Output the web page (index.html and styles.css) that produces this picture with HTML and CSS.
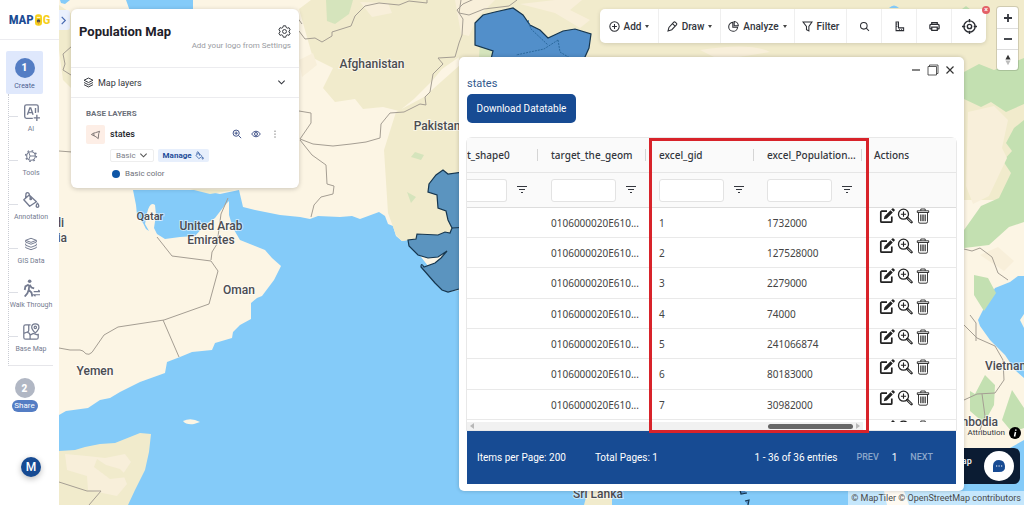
FILE: index.html
```html
<!DOCTYPE html>
<html lang="en">
<head>
<meta charset="utf-8">
<meta name="viewport" content="width=device-width, initial-scale=1">
<title>Population Map</title>
<link rel="stylesheet" href="styles.css">
</head>
<body>
<svg class="symbols" aria-hidden="true">
  <symbol id="filter-lines" viewBox="0 0 12 12"><path d="M1 2.500h10M3 5.500h6M5 8.500h2" fill="none" stroke="currentColor" stroke-width="1.200"/></symbol>
  <symbol id="edit" viewBox="0 0 16 16"><path d="M8 3.200H2.800a1 1 0 0 0-1 1v9a1 1 0 0 0 1 1h9a1 1 0 0 0 1-1V8.500" fill="none" stroke="currentColor" stroke-width="1.700"/><path d="m5.500 8.200 6-6 2.300 2.300-6 6-3 .8zM12.200 1.500 13.300.4q.6-.4 1.200 0l1.100 1.100q.4.600 0 1.200l-1.100 1.100z" fill="currentColor"/></symbol>
  <symbol id="zoom-in" viewBox="0 0 16 16"><g fill="none" stroke="currentColor"><circle cx="6.500" cy="6.200" r="5" stroke-width="1.300"/><path d="M6.500 3.600v5.200M3.900 6.200h5.200" stroke-width="1.100"/><path d="m10.300 10 4.200 4.200" stroke-width="2.500" stroke-linecap="round"/><path d="m10.800 10.500 3.600 3.600" stroke="#fff" stroke-width=".8"/></g></symbol>
  <symbol id="trash" viewBox="0 0 16 16"><g fill="none" stroke="currentColor" stroke-width=".9"><path d="M3.500 4.500v9.200q0 1.500 1.500 1.500h6q1.500 0 1.500-1.500V4.500M2.300 2.800h11.400v1.700H2.300zM5.800 2.700V1h4.400v1.700M5.700 6.500v6.700M7.200 6.500v6.700M8.800 6.500v6.700M10.300 6.500v6.700"/></g></symbol>
  <symbol id="layers" viewBox="0 0 16 16"><path d="m8 1.500 6.500 3.200L8 8 1.500 4.700zM1.500 8 8 11.300 14.500 8M1.500 11.200 8 14.500l6.500-3.300" fill="none" stroke="currentColor" stroke-width="1.400" stroke-linejoin="round"/></symbol>
  <symbol id="gear" viewBox="0 0 16 16"><path d="m6.500 1-.5 2-1.500.9-2-.6L1 6l1.500 1.300v1.500L1 10l1.500 2.700 2-.6L6 13l.5 2h3l.5-2 1.500-.9 2 .6L15 10l-1.500-1.200V7.300L15 6l-1.500-2.700-2 .6L10 3l-.5-2z" fill="none" stroke="currentColor" stroke-width="1.200" stroke-linejoin="round"/><circle cx="8" cy="8" r="2.400" fill="none" stroke="currentColor" stroke-width="1.200"/></symbol>
  <symbol id="bucket" viewBox="0 0 20 20"><g fill="none" stroke="currentColor" stroke-width="1.500" stroke-linejoin="round"><path d="M8 4.500 16 12l-7.500 5L2 9.700zM4 7.500 4.500 2.800Q6 .8 7.700 2.600L9.500 8"/><circle cx="9.700" cy="8.800" r=".8"/><path d="M17.200 13.500q-2 2.600-1.200 4 1.200 1.300 2.400 0 .8-1.400-1.200-4z"/></g></symbol>
  <symbol id="chevron" viewBox="0 0 10 10"><path d="m1.500 3 3.500 3.500L8.500 3" fill="none" stroke="currentColor" stroke-width="1.200"/></symbol>
</svg>

<nav class="sidebar" aria-label="Main">
  <a class="logo" href="#home" aria-label="MAPOG"><span>MAP</span><svg viewBox="0 0 8 13"><rect width="8" height="13" rx="3.500" fill="#f6cf1c"/><path d="M2 3.500h4" stroke="#fff" stroke-width="1"/><circle cx="4" cy="7.500" r="2" fill="#4b4e4b"/><path d="M3 8.500 4 12l1-3.500" fill="#d98734"/></svg><span class="logo-g">G</span></a>
  <button class="create"><span class="step">1</span>Create</button>
  <ul class="tools">
    <li><a href="#ai"><svg viewBox="0 0 20 20"><g fill="none" stroke="currentColor" stroke-width="1.500"><path d="M18 10.500V4q0-2-2-2H5Q3 2 3 4v11q0 2 2 2h7"/><path d="m6 13 2.700-7.500h1L12.300 13M7 10.700h4.300M15 5.500V11M16.500 13v7M13 16.500h7"/></g></svg>AI</a></li>
    <li><a href="#tools"><svg viewBox="0 0 20 20"><g fill="none" stroke="currentColor"><circle cx="10" cy="10" r="4.800" stroke-width="1.200"/><circle cx="10" cy="10" r="6" stroke-width="1.600" stroke-dasharray="1.800 2.910"/><path d="M15 10H9L7.500 6M9 10l-1.500 4" stroke-width="1.100"/></g></svg>Tools</a></li>
    <li><a href="#annotation"><svg viewBox="0 0 20 20"><use href="#bucket"/></svg>Annotation</a></li>
    <li><a href="#gis"><svg viewBox="-3 -3 22 22"><path d="m8 1 6.500 2.500L8 6 1.500 3.500zM1.500 3.500v2.200L8 8.300l6.500-2.600V3.500M1.500 7.500v2L8 12l6.500-2.500v-2M1.500 11.300v1.200L8 15l6.500-2.500v-1.200" fill="none" stroke="currentColor" stroke-width="1.200" stroke-linejoin="round"/></svg>GIS Data</a></li>
    <li><a href="#walk"><svg viewBox="0 0 20 20"><circle cx="8.500" cy="2.500" r="2" fill="currentColor"/><path d="M7.500 6 3.800 8.200l-.8 4M8.500 6.500l2 3 3 1M8.200 6.300 7.500 12l3 3 1 4.500M7.300 12.500 6 16l-3 3.500" fill="none" stroke="currentColor" stroke-width="2"/><path d="M13 14h7m-2-1.800 2 1.800M20 17.500h-7l2 1.700" fill="none" stroke="currentColor" stroke-width="1.300"/></svg>Walk Through</a></li>
    <li><a href="#basemap"><svg viewBox="0 0 20 20"><g fill="none" stroke="currentColor" stroke-width="1.400"><path d="M9.500 2H4Q2 2 2 4v12q0 2 2 2h12q2 0 2-2v-4M7.500 2v6q0 1.500-1.500 2l-4 1.500M9 18v-4q0-3-3-3.500M9 13.500l3.500-2L18 13.500"/><path d="M14.800 11q-4-3.500-4-6.200 0-3.800 4-3.800t4 3.800q0 2.700-4 6.200z"/><circle cx="14.800" cy="4.900" r="1.300"/></g></svg>Base Map</a></li>
  </ul>
  <button class="share"><span class="step muted">2</span><span class="share-label">Share</span></button>
  <button class="avatar">M</button>
</nav>

<main class="map">
  <svg class="canvas" viewBox="59 0 965 505" preserveAspectRatio="xMinYMin slice" role="img" aria-label="Map of the Middle East and South Asia">
    <path class="land" d="M59 0H1024V276H1018L1010 282 995 288 988 300 978 320 980 326 990 340 1005 355 1015 370 1024 378V440L1010 448H480L470 288 448 292 408 240 402 241 396 236 393 226 388 224 385 216 379 212 360 219 352 216 340 217 318 216 310 219 300 217 280 215 255 210 243 207 239 190 220 194 200 190H133L136 205 137 215 143 223 146 229 149 231 145 224 147 213Q150 201 155 205L156 215 154 228 157 234 165 239 180 237 195 236 205 225 215 218 225 205 229 201V215L233 228 240 240 255 246 265 250 272 258 281 266 274 280 262 296 257 298 251 303V319L240 325 233 332 232 338 215 343 212 350 192 352 180 357 167 362 165 373 140 382 120 392 110 398 100 400 88 408 66 411 59 415Z"/>
    <path class="water" d="M126 0h67v9l-16 5h-46zM60 0h10l-5 4-4-1z"/>
    <path class="steppe" d="M299 9l12-9h145l10 25-4 30-20 14-10 12-18 18-15 12-16-4-20 2-8-10-20 3-12-14 10-20-20-10zM384 150l12-38 28-15 36-32v170l-52 5-6 1-6-6-8-22zM59 5l12 8v75l-8-8-4-30zM190 189l20 5 25-4zM456 0h568v200h-60V60H459z"/>
    <path class="water" d="M889 8q5-5 10 0z"/>
    <path class="grass" d="M326 0h27l-4 14-14 10-8-3zM480 42l14 5-3 11h-12zM415 152l9 3-3 5-10-3zM407 192l9 5-5 6z" opacity=".6"/>
    <path class="grass" d="M964 72l15-8 15 6 30-12v46l-18 8-15-10-10 5-17-8zM1024 120l-10 8-8 15 6 8-9 10 8 12-12 25-18 8-17 24v18l25-3 20-18 15-5zM974 275l14 3 8 15-12 18-10-16zM985 375l10 10-1 20-10 18-14-12v-20l5 3zM1012 390l12 18v20l-12 4-10-12zM958 12l8-6 10 8-8 5z"/>
    <path class="cream" d="M360 2l28 1 4 10-20 4zM455 0h40l-18 18-8 18-8-2zM520 4l35-4h27l-12 10 20 10-10 8-25-15zM299 60l14-7 4 12-15 12zM700 50q50-8 70 2l-50 8zM968 112l26-6 14 14-6 28 5 10-18 38-16 8-7-18zM980 255l18-8 16 14-10 10z"/>
    <path class="land" d="M183 421q8-4 17 1l-6 2q-8 1-11-3zM1020 320l4-6v14zM884 491h20l5 14h-22z"/>
    <path class="steppe" d="M59 451l16-1 10-3 15-3 15-1 25-10 11 1-2 18-4 18-10 20-7 15H59zM588 490h24v15h-28z"/>
    <path class="cream" d="M65 454l22 2 18 2 20-4 6 8-8 12 4 10-10 12-29-6-1-14-20-6z"/>
    <path class="steppe" d="M97 459l-3 8 16 12 18-2-8-8-14-4z"/>
    <path class="border" d="M157 237l15 19 39 5 7 10-9 33-45 16-46 7-14 8-9 13q-6 11-12 3l-3-1H70l-11-2M163 320l16 37M211 260l1-8 5-8 4-30 7-16M59 482l28 9h14l-12 14M59 151l13 1M299 111l12 2v10l-11 16 13 5 20 2 18-2 15-2 14-4 1-14 9-11 14-1 16-8 6 1-1-8 5-5 3-18 10-10-5-6 17-1 4-14 3-8 1-16-6-9 6-6 22-10 12-4M300 140l12 15 14 10 1 19 7 2-1 8-12 3-7 8-3 12M299 31l6 8 10-1 7 4 10-6v-4l19-6 4-10 10-10 14-3 20 2 10-4 18 2v-4M461 0l-2 13 10 2 15-6 25-3 8-6M72 46l-9 8 2 10-2 6 8 5M291 9l11 15M964 249l8 2 8-3 12 9 6 16 10 7M964 325l13 13 18 8 8 14 1 20-9 13-18 1-13 6M970 315l6 8v18M982 394l3 22-5 14"/>
    <g class="state">
      <path d="m475 23 8-8 12-3 18-4 10 7 7 10 10 5 8 8 15-7 12-2 16 5-2 14-4 9v22H487l2-8 10-5-8-7 2-8-18-6z"/>
      <path class="south" d="M470 171 448 174 443 170 436 175 429 184 428 192 437 195 438 208 446 211 448 220 452 228 450 233 445 232 438 235 417 234 416 239 408 240 409 246 418 255 428 258 438 257 447 251 441 258 435 263 424 267Q421 262 421 267L435 283 442 290 448 292 459 289 475 280Z"/>
      <path d="M452 228 470 227M739 486l2 8 6-1M745 501l4-1-1 5"/>
    </g>
    <path class="district" d="m528 20 3 9 17 16M558 40l-14 9-28 6M558 40l2 12 10 6"/>
    <g class="labels">
      <text x="372" y="68">Afghanistan</text><text x="437" y="130">Pakistan</text>
      <text x="150" y="220" class="small">Qatar</text><text x="211" y="230">United Arab</text><text x="211" y="244">Emirates</text>
      <text x="239" y="294">Oman</text><text x="95" y="375">Yemen</text><text x="598" y="498">Sri Lanka</text>
      <text x="64" y="227" class="end">Saudi</text><text x="67" y="242" class="end">Arabia</text>
      <text x="985" y="370" class="start">Vietnam</text><text x="998" y="426" class="end">Cambodia</text>
    </g>
  </svg>

  <button class="collapse" aria-label="Toggle panel"><svg viewBox="0 0 10 10"><path d="m3 1 4 4-4 4" fill="none" stroke="currentColor" stroke-width="1.300"/></svg></button>

  <section class="panel">
    <header class="panel-head">
      <h1>Population Map</h1>
      <button class="icon" aria-label="Settings"><svg class="i13"><use href="#gear"/></svg></button>
      <p>Add your logo from Settings</p>
    </header>
    <button class="layers-row"><svg class="i11"><use href="#layers"/></svg><span>Map layers</span><svg class="i9"><use href="#chevron"/></svg></button>
    <div class="layers">
      <h2>BASE LAYERS</h2>
      <div class="layer">
        <span class="thumb"><svg viewBox="0 0 12 12"><path d="m1.500 6 2.500-1.500 2-.5 4.500-1.500-1 2.500L9 10.500 6.500 8.500 4.500 7.500zM4 4.500l.5 3" fill="none" stroke="currentColor"/></svg></span>
        <strong>states</strong>
        <button class="icon" aria-label="Zoom to layer"><svg viewBox="0 0 12 12"><path d="M7.800 7.800 11 11M5 3v4M3 5h4" stroke="currentColor" stroke-width="1.200"/><circle cx="5" cy="5" r="3.700" fill="none" stroke="currentColor" stroke-width="1.200"/></svg></button>
        <button class="icon" aria-label="Toggle visibility"><svg viewBox="0 0 12 12"><path d="M.7 6Q6-.8 11.300 6 6 12.800.7 6z" fill="none" stroke="currentColor" stroke-width="1.200"/><circle cx="6" cy="6" r="1.800" fill="none" stroke="currentColor" stroke-width="1.200"/></svg></button>
        <button class="icon" aria-label="More"><svg viewBox="0 0 12 12"><path d="M6 2v1.300M6 5.500v1.300M6 9v1.300" stroke="currentColor" stroke-width="1.200"/></svg></button>
      </div>
      <div class="style-row"><button class="basic">Basic <svg class="i9"><use href="#chevron"/></svg></button><button class="manage">Manage <svg class="i9"><use href="#bucket"/></svg></button></div>
      <p class="legend"><span class="dot"></span>Basic color</p>
    </div>
  </section>

  <div class="toolbar" role="toolbar">
    <button class="w-add"><svg viewBox="0 0 16 16"><circle cx="8" cy="8" r="6.800"/><path d="M8 4.500v7M4.500 8h7"/></svg>Add<i></i></button>
    <button class="w-draw"><svg viewBox="0 0 16 16"><path d="m1.500 14.500 1.300-5L9.500 2q1.200-1.200 2.500-.3l1.800 1.600q1 1.200-.1 2.400L7 12.700zM8 3.700l4 4"/></svg>Draw<i></i></button>
    <button class="w-analyze"><svg viewBox="0 0 16 16"><path d="M7 2a6.500 6.500 0 1 0 7 7H7zM9 .8V7h6A6.200 6.200 0 0 0 9 .8z"/></svg>Analyze<i></i></button>
    <button class="w-filter"><svg viewBox="0 0 16 16"><path d="M1.500 1.500h13L10 8v6.500l-3.500-2V8z"/></svg>Filter</button>
    <button class="w-icon" aria-label="Search"><svg viewBox="0 0 16 16"><circle cx="7" cy="7" r="4.800"/><path d="m10.500 10.500 4 4"/></svg></button>
    <button class="w-icon" aria-label="Measure"><svg viewBox="0 0 16 16"><path d="M3 1.500h3.500v8.500H14v4H3zM3 4.500h2M3 7.500h2M8 14v-2M11 14v-2"/></svg></button>
    <button class="w-icon" aria-label="Print"><svg viewBox="0 0 16 16"><path d="M4 5V2.200h8V5M4 11.500H2q-.7 0-.7-.8V6.500Q1.300 5 2.800 5h10.400q1.500 0 1.500 1.500v4.200q0 .8-.7.800h-2M4 9h8v4.800H4z" stroke-width="1.800"/></svg></button>
    <button class="w-icon" aria-label="Locate"><svg class="locate" viewBox="0 0 16 16"><circle cx="8" cy="8" r="6"/><circle cx="8" cy="8" r="2.300"/><path d="M8 0v3.500M8 12.500V16M0 8h3.500M12.500 8H16"/></svg></button>
    <button class="dismiss" aria-label="Close toolbar">×</button>
  </div>

  <div class="zoom">
    <button aria-label="Zoom in"><svg viewBox="0 0 10 10"><path d="M5 1v8M1 5h8" stroke="currentColor" stroke-width="1.800"/></svg></button>
    <button aria-label="Zoom out"><svg viewBox="0 0 10 10"><path d="M1 5h8" stroke="currentColor" stroke-width="1.800"/></svg></button>
    <button aria-label="Reset north"><svg viewBox="0 0 10 14"><path d="M5 1 8 6.500H2z" fill="#333"/><path d="M5 13 2 7.500h6z" fill="#bbb"/></svg></button>
  </div>

  <div class="attribution">Attribution <svg viewBox="0 0 12 12"><circle cx="6" cy="6" r="6"/><path d="M6.500 5 5.500 9.500M6.800 2.500v1.300" stroke="#fff" stroke-width="1.500"/></svg></div>
  <div class="promo"><span>Map</span><button aria-label="Chat"><svg viewBox="0 0 14 14"><path d="M1 13V6.500Q1.500 1 7 1t6 6-6 6z" fill="#174b93"/><path d="M4 7h1.200M6.500 7h1.200M9 7h1.200" stroke="#fff" stroke-width="1.200"/></svg></button></div>
  <footer class="credits"><a href="#maptiler">© MapTiler</a> <a href="#osm">© OpenStreetMap contributors</a></footer>

  <section class="window">
    <div class="controls">
      <button aria-label="Minimize"><svg viewBox="0 0 12 12"><path d="M2 6h8"/></svg></button>
      <button aria-label="Maximize"><svg viewBox="0 0 12 12"><path d="M1 2.500h8.500V11H1zM2.500 2.500V1H11v8.500H9.500"  stroke-width=".8"/></svg></button>
      <button aria-label="Close"><svg viewBox="0 0 12 12"><path d="m2.500 2.500 7 7M9.500 2.500l-7 7"/></svg></button>
    </div>
    <h2>states</h2>
    <button class="download">Download Datatable</button>
    <div class="grid">
      <div class="scroller">
      <table>
        <colgroup><col class="c-shape"><col class="c-data"><col class="c-data"><col class="c-data"><col></colgroup>
        <thead>
          <tr class="names"><th>t_shape0</th><th>target_the_geom</th><th>excel_gid</th><th>excel_Population...</th><th>Actions</th></tr>
          <tr class="filters">
            <td><div><input aria-label="Filter t_shape0"><button aria-label="Filter options"><svg><use href="#filter-lines"/></svg></button></div></td>
            <td><div><input aria-label="Filter target_the_geom"><button aria-label="Filter options"><svg><use href="#filter-lines"/></svg></button></div></td>
            <td><div><input aria-label="Filter excel_gid"><button aria-label="Filter options"><svg><use href="#filter-lines"/></svg></button></div></td>
            <td><div><input aria-label="Filter excel_Population"><button aria-label="Filter options"><svg><use href="#filter-lines"/></svg></button></div></td>
            <td></td>
          </tr>
        </thead>
        <tbody id="rows"></tbody>
      </table>
      </div>
      <div class="hscroll"><span class="arrow"></span><span class="bar"></span><span class="arrow next"></span></div>
      <div class="highlight"></div>
    </div>
    <footer class="pager">
      <span class="per">Items per Page: 200</span><span>Total Pages: 1</span>
      <span class="entries">1 - 36 of 36 entries</span><button>PREV</button><span class="page">1</span><button>NEXT</button>
    </footer>
  </section>
</main>
<script src="rows.js"></script>
</body>
</html>
```

FILE: styles.css
```css
* { box-sizing: border-box; }
body { margin: 0; display: flex; min-height: 100vh; font-family: Roboto, "Liberation Sans", sans-serif; font-size: 9px; color: #33363d; }
button { font: inherit; color: inherit; background: none; border: 0; padding: 0; }
a { color: inherit; text-decoration: none; }
h1, h2, p, ul { margin: 0; padding: 0; }
svg { display: block; flex: none; }
.symbols { position: absolute; width: 0; height: 0; }

/* Sidebar */
.sidebar { width: 59px; flex: none; display: flex; flex-direction: column; background: #fff; color: #747b90; font-size: 7px; }
.logo { height: 40px; display: flex; align-items: center; justify-content: center; gap: 1px; border-bottom: 1px solid #ececf0; color: #1c4c94; font: 700 13px/20px "Roboto Condensed", Roboto, sans-serif; }
.logo svg { width: 7px; height: 12px; }
.logo-g { color: #f6cf1c; }
.create { width: 37px; height: 43px; margin: 11px 0 0 6px; background: #dfe8fc; border-radius: 2px; display: flex; flex-direction: column; align-items: center; gap: 3px; padding-top: 7px; color: #4b5f91; line-height: 10px; }
.step { width: 20px; height: 20px; border-radius: 50%; background: #547dc4; color: #fff; display: flex; align-items: center; justify-content: center; font-weight: 900; font-size: 10px; }
.step.muted { background: #b1b7c4; }
.tools { list-style: none; margin: 0 6px 0 8px; padding-top: 7px; border-left: 1px dotted #c9ccd4; border-bottom: 1px solid #e6e6ea; }
.tools li { height: 44px; display: flex; justify-content: center; background: linear-gradient(#dddfe5, #dddfe5) 0 15px / 9px 1px no-repeat; }
.tools a { display: flex; flex-direction: column; align-items: center; line-height: 12px; white-space: nowrap; }
.tools svg { width: 18px; height: 18px; margin: 2px 0; }
.share { margin: 12px 0 0 12px; width: 25px; display: flex; flex-direction: column; align-items: center; gap: 2px; }
.share-label { background: #547dc4; color: #fff; border-radius: 6px; width: 26px; line-height: 12px; font-size: 8px; }
.avatar { width: 20px; height: 20px; margin: 45px 0 0 21px; border-radius: 50%; background: #174b93; color: #fff; font-size: 12px; font-weight: 500; box-shadow: 0 2px 6px #0004; }

/* Map */
.map { flex: 1; position: relative; overflow: hidden; background: #84cbf9; }
.canvas { position: absolute; inset: 0; width: 100%; height: 100%; }
.land { fill: #fcf5e4; }
.water { fill: #84cbf9; }
.steppe { fill: #f1ebcc; }
.grass { fill: #c3e0b1; }
.cream { fill: #f8efda; }
.border { fill: none; stroke: #a59e93; stroke-width: 1; }
.state path { fill: #528fca; stroke: #16364f; stroke-width: 1.2; }
.state .south { fill: #5b94bf; }
.district { fill: none; stroke: #2c6a9e; stroke-width: 1; stroke-dasharray: 2 1; }
.labels { font: 500 12px Roboto, sans-serif; fill: #4b4c51; text-anchor: middle; stroke: #fff8; stroke-width: 2px; paint-order: stroke; }
.labels .small { font-size: 11px; }
.labels .start { text-anchor: start; }
.labels .end { text-anchor: end; }
.collapse { position: absolute; left: 0; top: 10px; width: 11px; height: 20px; background: #eaf0fd; color: #4568b0; border-radius: 0 3px 3px 0; }
.collapse svg { width: 9px; height: 9px; }

/* Layer panel */
.panel { position: absolute; left: 12px; top: 9px; width: 228px; background: #fff; border-radius: 6px; box-shadow: 0 1px 5px #0003; }
.panel-head { display: grid; grid-template-columns: 1fr auto; align-content: start; height: 59px; padding: 14px 8px 0; border-bottom: 1px solid #ececef; }
.panel h1 { font-size: 13px; line-height: 17px; color: #1e2129; }
.panel-head .icon { align-self: center; }
.panel-head p { grid-column: 1 / 3; text-align: right; font-size: 8px; line-height: 11px; color: #9a9ca2; }
.i13 { width: 13px; height: 13px; }
.i11 { width: 11px; height: 11px; }
.i9 { width: 9px; height: 9px; }
.layers-row { width: 100%; height: 30px; display: flex; align-items: center; gap: 4px; padding: 0 13px 0 12px; border-bottom: 1px solid #ececef; }
.layers-row span { flex: 1; text-align: left; }
.layers { padding: 10px 15px 8px; }
.layers h2 { font-size: 8px; line-height: 12px; font-weight: 700; color: #6c7079; }
.layer { display: flex; align-items: center; gap: 9px; margin-top: 4px; height: 20px; color: #44558a; }
.layer strong { flex: 1; margin-left: -4px; color: #24262c; font-weight: 500; }
.layer .icon svg { width: 10px; height: 10px; }
.layer .icon:last-child { color: #555; margin-right: 4px; }
.thumb { width: 19px; height: 19px; display: grid; place-items: center; background: #fdeee6; border-radius: 2px; color: #77706e; }
.thumb svg { width: 11px; height: 11px; }
.style-row { display: flex; gap: 4px; margin: 5px 0 0 24px; font-size: 8px; }
.style-row button { height: 13px; display: flex; align-items: center; gap: 3px; border-radius: 2px; padding: 0 5px; }
.basic { border: 1px solid #eee; color: #7c8088; }
.basic svg { color: #555; }
.style-row .manage { background: #e7effc; color: #1e4c99; font-weight: 700; }
.legend { display: flex; align-items: center; gap: 5px; margin: 6px 0 0 26px; font-size: 8px; line-height: 12px; color: #6d7078; }
.dot { width: 8px; height: 8px; border-radius: 50%; background: #0e56a6; }

/* Toolbar */
.toolbar { position: absolute; right: 38px; top: 9px; display: flex; height: 34px; background: #fff; border-radius: 5px; box-shadow: 0 1px 4px #0002; font-size: 10px; font-weight: 500; }
.toolbar button { display: flex; align-items: center; justify-content: center; gap: 4px; }
.toolbar button + button { border-left: 1px solid #efefef; }
.toolbar svg { width: 11px; height: 11px; fill: none; stroke: #2b2d33; stroke-width: 1.5; }
.toolbar .locate { width: 15px; height: 15px; }
.toolbar i { border: 2px solid transparent; border-top: 3px solid #444; border-bottom: 0; }
.w-add { width: 58px; } .w-draw { width: 62px; } .w-analyze { width: 74px; } .w-filter { width: 52px; } .w-icon { width: 35px; }
.toolbar button.dismiss { position: absolute; right: -4px; top: -3px; width: 8px; height: 8px; border: 0; border-radius: 50%; background: #e35f66; color: #fff; font-size: 7px; line-height: 8px; }

.zoom { position: absolute; right: 6px; top: 7px; width: 21px; background: #fff; border-radius: 3px; box-shadow: 0 0 0 1px #0002; }
.zoom button { display: grid; place-items: center; width: 100%; height: 21px; }
.zoom button + button { border-top: 1px solid #ddd; }
.zoom svg { width: 10px; height: 12px; }
.attribution { position: absolute; right: 3px; bottom: 65px; display: flex; align-items: center; gap: 4px; font-size: 8px; line-height: 14px; }
.attribution svg { width: 12px; height: 12px; }
.promo { position: absolute; right: 4px; bottom: 21px; width: 76px; height: 36px; display: flex; justify-content: space-between; padding: 3px 6px 3px 10px; background: #0b1c33; border-radius: 6px; color: #fff; font-weight: 500; }
.promo span { line-height: 20px; }
.promo button { width: 30px; height: 30px; border-radius: 50%; background: #fff; display: grid; place-items: center; }
.promo svg { width: 14px; height: 14px; }
.credits { position: absolute; right: 0; bottom: 0; padding: 0 3px; background: #fff8; color: #4a4a4a; font-size: 9px; line-height: 14px; }

/* Data window */
.window { position: absolute; right: 60px; top: 57px; bottom: 14px; width: 505px; display: flex; flex-direction: column; padding: 6px 8px 7px; background: #fff; border-radius: 5px; box-shadow: 0 0 4px #0003; }
.controls { display: flex; justify-content: flex-end; gap: 5px; height: 14px; }
.controls button { display: grid; place-items: center; }
.controls svg { width: 12px; height: 12px; fill: none; stroke: #333; stroke-width: 1.2; }
.window h2 { font-size: 11px; line-height: 13px; font-weight: 400; color: #31588d; }
.download { align-self: flex-start; width: 109px; height: 29px; margin: 4px 0 15px; border-radius: 5px; background: #174b93; color: #fff; font-size: 10px; }
.grid { position: relative; flex: 1; min-height: 0; display: flex; flex-direction: column; border-radius: 5px 5px 0 0; box-shadow: 0 0 0 1px #e8e8e8; font-family: "Noto Sans", sans-serif; font-size: 10px; }
.scroller { flex: 1; min-height: 0; overflow: hidden; }
table { width: 100%; table-layout: fixed; border-collapse: separate; border-spacing: 0; }
.c-shape { width: 71px; } .c-data { width: 108px; }
th, td { padding: 0 0 0 13px; text-align: left; white-space: nowrap; overflow: hidden; }
th:first-child, td:first-child { padding-left: 0; }
th:last-child { padding-left: 12px; }
td:last-child { padding-left: 17px; vertical-align: top; }
thead { background: #fafafa; }
.names th { height: 35px; font-weight: 500; border-bottom: 1px solid #e6e6e6; background: linear-gradient(#d5d5d5, #d5d5d5) right 11px / 1px 12px no-repeat; }
.names th:last-child { background: none; }
.filters td { height: 35px; border-bottom: 1px solid #ddd; }
.filters div { display: flex; gap: 9px; }
.filters input { width: 65px; height: 23px; border: 1px solid #e3e3e3; border-radius: 3px; background: #fff; }
.filters td:first-child input { width: 40px; border-left: 0; border-radius: 0 3px 3px 0; }
.filters svg { width: 12px; height: 12px; }
.filters button { display: grid; place-items: center; }
tbody td { height: 30px; border-bottom: 1px solid #e9e9e9; color: #444; }
tbody tr:nth-child(3n) td { height: 31px; }
.actions { display: flex; gap: 2px; }
.actions svg { width: 16px; height: 16px; color: #222; }
.hscroll { display: flex; align-items: center; height: 8px; width: 396px; background: #f1f1f1; padding: 0 3px; }
.bar { flex: none; width: 85px; height: 5px; margin-left: auto; border-radius: 3px; background: #666; }
.arrow { border: 3px solid transparent; border-left: 0; border-right: 4px solid #b8b8b8; }
.arrow.next { margin-left: 3px; border-right: 0; border-left: 4px solid #b8b8b8; }
.highlight { position: absolute; left: 182px; right: 87px; top: 0; bottom: -3px; border: 3px solid #d8232a; pointer-events: none; z-index: 1; }
.pager { flex: none; height: 54px; display: flex; align-items: center; padding: 0 23px 0 10px; background: #174b93; color: #fff; font-size: 10px; }
.per { margin-right: 29px; }
.entries { margin-left: auto; }
.pager button { color: #8ba7cb; font-size: 9px; font-weight: 500; }
.entries + button { margin-left: 19px; }
.page { margin: 0 13px; }
```

FILE: rows.js
```javascript
const populations = [1732000, 127528000, 2279000, 74000, 241066874, 80183000, 30982000, ""];
const icons = [["edit", "Edit"], ["zoom-in", "Zoom to row"], ["trash", "Delete"]]
  .map(([id, label]) => `<button aria-label="${label}"><svg><use href="#${id}"/></svg></button>`)
  .join("");
document.getElementById("rows").innerHTML = populations
  .map((value, i) => `<tr><td></td><td>${value ? "0106000020E610..." : ""}</td><td>${value ? i + 1 : ""}</td><td>${value}</td><td><div class="actions">${icons}</div></td></tr>`)
  .join("");
```
